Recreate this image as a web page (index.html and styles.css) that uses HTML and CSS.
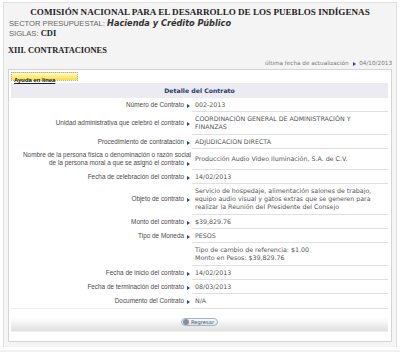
FILE: index.html
```html
<!DOCTYPE html>
<html lang="es">
<head>
  <meta charset="UTF-8" />
  <title>XIII. Contrataciones | CDI</title>
  <link rel="stylesheet" href="styles.css">
</head>
<body>
  <div class="page">
    <div class="header">
      <h1 class="org">COMISIÓN NACIONAL PARA EL DESARROLLO DE LOS PUEBLOS INDÍGENAS</h1>
      <div class="meta">SECTOR PRESUPUESTAL: <em>Hacienda y Crédito Público</em></div>
      <div class="meta">SIGLAS: <b>CDI</b></div>
      <h2 class="section">XIII. CONTRATACIONES</h2>
      <div class="updated">última fecha de actualización <span class="arrow"></span> 04/10/2013</div>
    </div>

    <div class="box">
      <div class="help"><a href="#">Ayuda en línea</a></div>

      <table class="detail">
        <tr><th colspan="2">Detalle del Contrato</th></tr>
        <tr>
          <td class="label">Número de Contrato<span class="arrow"></span></td>
          <td class="val">002-2013</td>
        </tr>
        <tr>
          <td class="label">Unidad administrativa que celebró el contrato<span class="arrow"></span></td>
          <td class="val">COORDINACIÓN GENERAL DE ADMINISTRACIÓN Y<br>FINANZAS</td>
        </tr>
        <tr>
          <td class="label">Procedimiento de contratación<span class="arrow"></span></td>
          <td class="val">ADJUDICACION DIRECTA</td>
        </tr>
        <tr>
          <td class="label">Nombre de la persona física o denominación o razón social<br>de la persona moral a que se asignó el contrato<span class="arrow"></span></td>
          <td class="val">Producción Audio Video Iluminación, S.A. de C.V.</td>
        </tr>
        <tr>
          <td class="label">Fecha de celebración del contrato<span class="arrow"></span></td>
          <td class="val">14/02/2013</td>
        </tr>
        <tr>
          <td class="label">Objeto de contrato<span class="arrow"></span></td>
          <td class="val">Servicio de hospedaje, alimentación salones de trabajo,<br>equipo audio visual y gatos extras que se generen para<br>realizar la Reunión del Presidente del Consejo</td>
        </tr>
        <tr>
          <td class="label">Monto del contrato<span class="arrow"></span></td>
          <td class="val">$39,829.76</td>
        </tr>
        <tr>
          <td class="label">Tipo de Moneda<span class="arrow"></span></td>
          <td class="val">PESOS</td>
        </tr>
        <tr>
          <td class="label"></td>
          <td class="val">Tipo de cambio de referencia: $1.00<br>Monto en Pesos: $39,829.76</td>
        </tr>
        <tr>
          <td class="label">Fecha de inicio del contrato<span class="arrow"></span></td>
          <td class="val">14/02/2013</td>
        </tr>
        <tr>
          <td class="label">Fecha de terminación del contrato<span class="arrow"></span></td>
          <td class="val">08/03/2013</td>
        </tr>
        <tr>
          <td class="label">Documento del Contrato<span class="arrow"></span></td>
          <td class="val">N/A</td>
        </tr>
        <tr>
          <td colspan="2" class="actions">
            <button class="back"><span class="back-icon"></span>Regresar</button>
          </td>
        </tr>
      </table>
    </div>
  </div>
  <div class="footer"></div>
</body>
</html>
```

FILE: styles.css
```css
* { box-sizing: border-box; }
body {
  margin: 0;
  background: #fff;
  font-family: 'Liberation Sans', Arial, sans-serif;
  color: #555;
}
.page {
  margin: 2px 3px 0;
  background: #f4f4f4;
  border: 1px solid #e2e2e2;
  border-bottom: none;
  padding: 0 4px 5px;
}
.header {
  padding-top: 4px;
}
.org {
  margin: 0 0 1px;
  text-align: center;
  font-family: 'Liberation Serif', 'Times New Roman', serif;
  font-size: 9.1px;
  line-height: 11px;
  color: #222;
}
.meta {
  height: 10px;
  font-size: 7.6px;
  line-height: 10px;
  color: #666;
  padding-left: 1px;
}
.meta em {
  font-family: 'DejaVu Sans', Verdana, sans-serif;
  font-weight: bold;
  font-size: 8.2px;
  line-height: 8px;
  color: #333;
}
.meta b {
  font-family: 'Liberation Serif', serif;
  font-size: 8.5px;
  line-height: 8px;
  color: #222;
}
.section {
  margin: 6px 0 0;
  font-family: 'Liberation Serif', 'Times New Roman', serif;
  font-size: 8.4px;
  line-height: 11px;
  color: #222;
}
.updated {
  margin-top: 2px;
  text-align: right;
  font-family: 'DejaVu Sans', Verdana, sans-serif;
  font-size: 5.7px;
  line-height: 10px;
  color: #777;
}
.arrow {
  display: inline-block;
  width: 0;
  height: 0;
  margin: 0 1px 0 3px;
  border-left: 3px solid #24438f;
  border-top: 2px solid transparent;
  border-bottom: 2px solid transparent;
  vertical-align: -1px;
}
.box {
  margin-top: 1px;
  background: #fff;
  border: 1px solid #d4d4d4;
  padding: 2px 3px 9px 2px;
}
.help {
  width: 67px;
  height: 9px;
  margin-bottom: 2px;
  border: 1px dotted #b0b0b0;
  background: linear-gradient(#fffbd8, #f9de3a);
  padding-left: 2px;
  line-height: 7px;
}
.help a {
  font-size: 5.9px;
  font-weight: bold;
  color: #222;
}
.detail {
  width: 100%;
  border-collapse: collapse;
}
.detail th {
  height: 15px;
  background: #ebebf1;
  font-family: 'DejaVu Sans', Verdana, sans-serif;
  font-size: 6.2px;
  font-weight: bold;
  color: #2b3a6b;
  text-align: center;
}
.detail td {
  padding: 3px 0 2.3px;
  line-height: 8px;
  vertical-align: middle;
}
.label {
  width: 181px;
  text-align: right;
  font-size: 6.4px;
  color: #4a4a4a;
  padding-right: 1px !important;
}
.val {
  padding-left: 3px !important;
  font-family: 'DejaVu Sans', Verdana, sans-serif;
  font-size: 6.3px;
  color: #555;
  border-bottom: 1px solid #e0e0e0;
}
.detail td.actions {
  padding: 7px 0 6px;
  text-align: center;
  background: linear-gradient(#fff 40%, #dedede);
}
.back {
  display: inline-flex;
  align-items: center;
  gap: 2px;
  height: 8px;
  padding: 0 3px 0 1px;
  border: 1px solid #a9b4c2;
  border-radius: 5px;
  background: linear-gradient(#f4f8fc, #d9e3ee);
  font-family: 'DejaVu Sans', Verdana, sans-serif;
  font-size: 5.2px;
  color: #556;
  cursor: pointer;
}
.back-icon {
  width: 6px;
  height: 6px;
  border-radius: 50%;
  background: #8a8f96;
}
.footer {
  margin: 3px 0 0;
  height: 12px;
  background: linear-gradient(#f2f2f2, #dcdcdc);
}
```
